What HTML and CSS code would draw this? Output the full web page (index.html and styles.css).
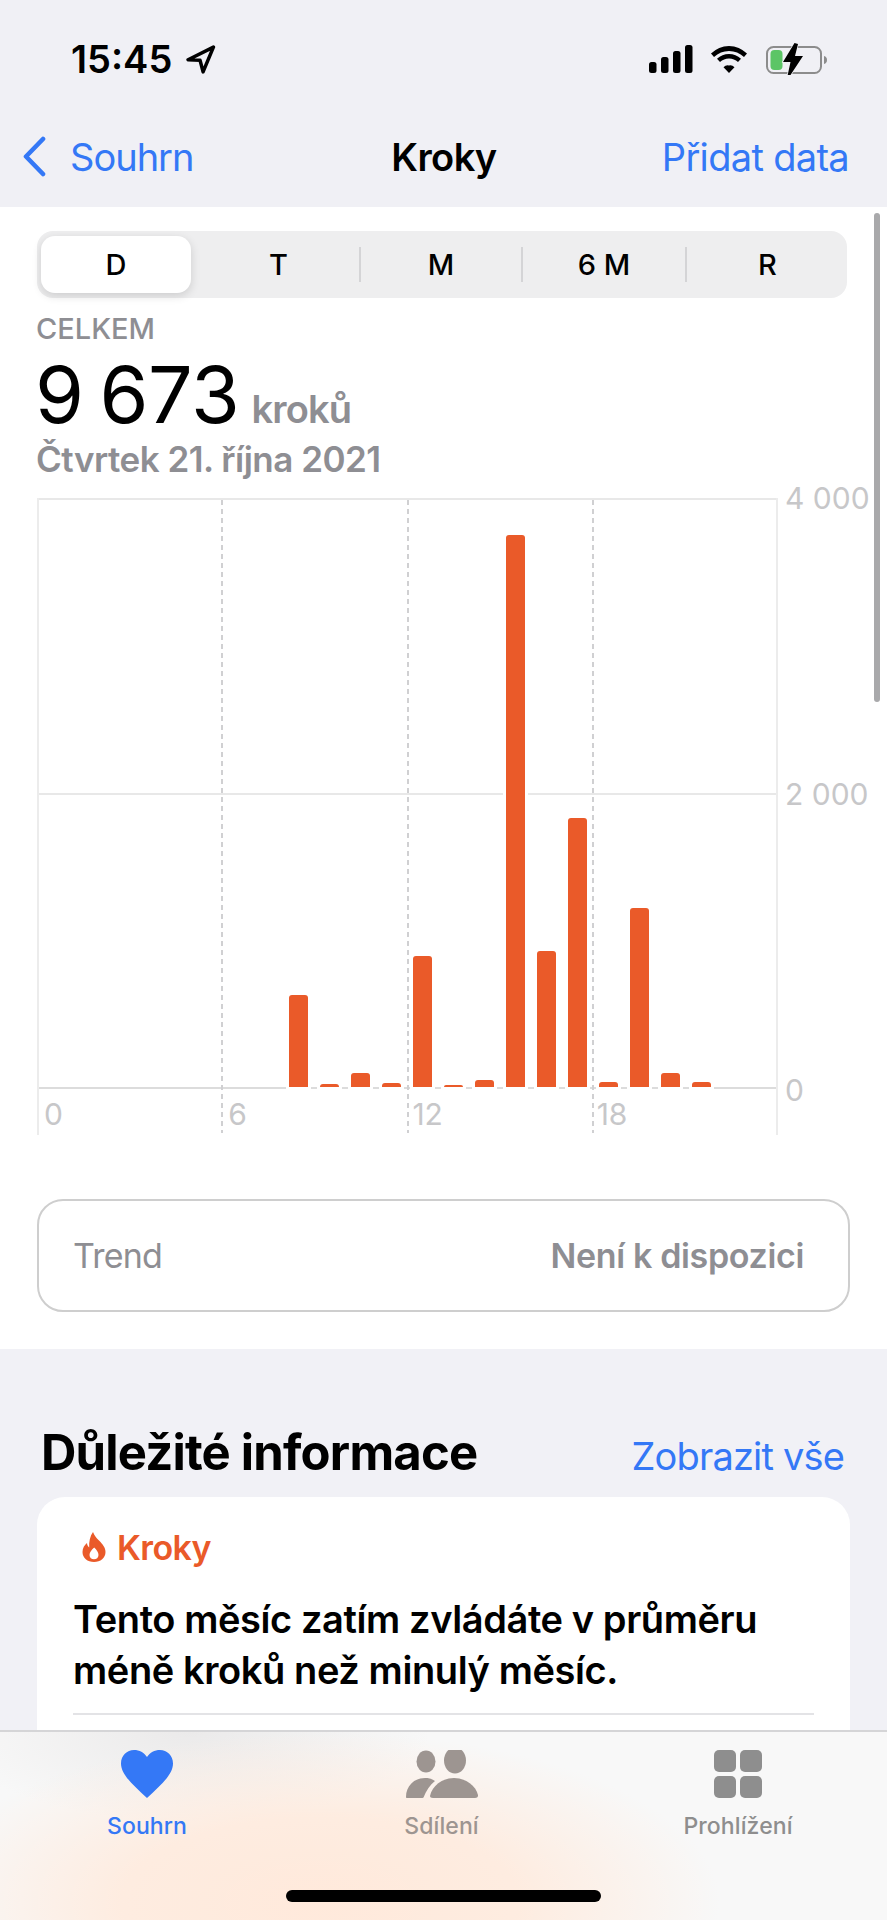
FILE: index.html
```html
<!DOCTYPE html>
<html lang="cs">
<head>
<meta charset="utf-8">
<title>Kroky</title>
<link rel="stylesheet" href="styles.css">
</head>
<body>
<div class="phone">
  <header class="top">
    <div class="status">
      <div class="status-left">
        <span class="clock">15:45</span>
        <svg class="loc" viewBox="0 0 30 28"><path d="M27.500 2 3 14.200l11.600.6L17.500 26z" fill="none" stroke="#000" stroke-width="3.400" stroke-linejoin="round"/></svg>
      </div>
      <div class="status-right">
        <svg class="signal" viewBox="0 0 44 28"><rect x="0" y="17" width="7.500" height="11" rx="2.500"/><rect x="12" y="12" width="7.500" height="16" rx="2.500"/><rect x="24" y="6" width="7.500" height="22" rx="2.500"/><rect x="36" y="0" width="7.500" height="28" rx="2.500"/></svg>
        <svg class="wifi" viewBox="0 0 38 27"><path d="M19 5a22 22 0 0 1 15 6l3-3.400A27 27 0 0 0 19 0 27 27 0 0 0 1 7.600L4 11a22 22 0 0 1 15-6z"/><path d="M19 12.500a13 13 0 0 1 9 3.600l3-3.400A18 18 0 0 0 19 8a18 18 0 0 0-12 4.700l3 3.400a13 13 0 0 1 9-3.600z"/><path d="M19 19.500a6 6 0 0 0-5.500 1.700l5.500 5.800 5.500-5.800a6 6 0 0 0-5.500-1.700z"/></svg>
        <svg class="battery" viewBox="0 0 62 32"><rect x="1" y="4" width="54" height="26" rx="6.500" fill="none" stroke="#8c8c8c" stroke-width="2"/><path d="M58 13v8c2-.5 3-2 3-4s-1-3.500-3-4z" fill="#8c8c8c"/><rect x="4.500" y="7" width="12" height="20" rx="4" fill="#5cc566"/><path d="M28.500 0 17 19h7.500l-3 14 2 .500L37 13h-8l3-12z" fill="#000" stroke="#f0f0f5" stroke-width="1.500" paint-order="stroke"/></svg>
      </div>
    </div>
    <nav class="nav">
      <div class="back">
        <svg class="chev" viewBox="0 0 24 41"><path d="M21 3 4 20.500 21 38" fill="none" stroke="#3478f6" stroke-width="4.600" stroke-linecap="round" stroke-linejoin="round"/></svg>
        <span>Souhrn</span>
      </div>
      <div class="nav-title">Kroky</div>
      <div class="nav-action">Přidat data</div>
    </nav>
  </header>

  <main class="scroll">
    <div class="indicator"></div>
    <section class="sheet">
      <div class="segments">
        <div class="seg active">D</div>
        <div class="seg">T</div>
        <div class="seg rule">M</div>
        <div class="seg rule">6 M</div>
        <div class="seg rule seg-last">R</div>
      </div>
      <div class="overline">CELKEM</div>
      <div class="total"><span class="total-num">9 673</span><span class="total-unit">kroků</span></div>
      <div class="date">Čtvrtek 21. října 2021</div>

      <div class="chart">
        <div class="plot">
          <div class="area">
            <i class="hline"></i>
            <i class="vline v1"></i><i class="vline v2"></i><i class="vline v3"></i>
            <div class="bars">
              <b></b><b></b><b></b><b></b><b></b><b></b><b></b><b></b>
              <b class="bar" style="height:92px"></b>
              <b class="bar" style="height:3px"></b>
              <b class="bar" style="height:14px"></b>
              <b class="bar" style="height:4px"></b>
              <b class="bar" style="height:131px"></b>
              <b class="bar" style="height:2px"></b>
              <b class="bar" style="height:7px"></b>
              <b class="bar" style="height:552px"></b>
              <b class="bar" style="height:136px"></b>
              <b class="bar" style="height:269px"></b>
              <b class="bar" style="height:5px"></b>
              <b class="bar" style="height:179px"></b>
              <b class="bar" style="height:14px"></b>
              <b class="bar" style="height:5px"></b>
              <b></b><b></b>
            </div>
          </div>
          <div class="xaxis"><span>0</span><span>6</span><span>12</span><span>18</span></div>
        </div>
        <div class="yaxis"><span>4 000</span><span>2 000</span><span>0</span></div>
      </div>

      <div class="trend">
        <span class="trend-l">Trend</span>
        <span class="trend-r">Není k dispozici</span>
      </div>
    </section>

    <section class="info">
      <div class="info-head">
        <h2>Důležité informace</h2>
        <span class="see-all">Zobrazit vše</span>
      </div>
      <div class="card">
        <div class="card-tag">
          <svg class="flame" viewBox="0 0 24 30"><path fill-rule="evenodd" fill="#ea5a29" d="M11 0c1.500 3.500 3 5.500 6 8.500 3.500 3.500 6.500 7 6.500 11.500 0 6-5 10-11.500 10S.500 26 .500 20c0-4 2-7 4.500-9 .2 2 .8 3.400 2.200 4.400C6.800 10 8 4 11 0zm1.200 15.500c-2.700 2.500-4.700 4.800-4.700 7.500 0 2.800 2 4.300 4.500 4.300s4.500-1.500 4.500-4.300c0-2.700-1.800-5-4.300-7.500z"/></svg>
          <span>Kroky</span>
        </div>
        <p class="card-text">Tento měsíc zatím zvládáte v průměru méně kroků než minulý měsíc.</p>
        <div class="card-rule"></div>
      </div>
    </section>
  </main>

  <footer class="tabbar">
    <div class="tabs">
      <div class="tab tab-on">
        <svg class="tab-ico" viewBox="0 0 52 48"><path fill="#3478f6" d="M26 48C12 35 0 24.500 0 13.500 0 5.500 6 0 13 0c5.500 0 10 2.500 13 7 3-4.500 7.500-7 13-7 7 0 13 5.500 13 13.500C52 24.500 40 35 26 48z"/></svg>
        <span>Souhrn</span>
      </div>
      <div class="tab tab-share">
        <svg class="tab-ico share" viewBox="0 0 72 48"><g fill="#9d9591"><ellipse cx="20" cy="11.500" rx="9.500" ry="11"/><ellipse cx="49" cy="10.500" rx="11" ry="13"/><path d="M0 47c0-11 8-19 19-19 4 0 7.500 1 10 3-5 4-9 10-11.500 16.500-.2.300-.5.500-1 .500H1c-.6 0-1-.4-1-1z"/><path d="M27 48c-2 0-3-1-3-2 2-10 12-18 24-18s22 8 24 17c.2 2-1 3-3 3z"/></g></svg>
        <span>Sdílení</span>
      </div>
      <div class="tab tab-browse">
        <svg class="tab-ico" viewBox="0 0 48 48"><g fill="#8e8e8e"><rect width="22" height="22" rx="5"/><rect x="26" width="22" height="22" rx="5"/><rect y="26" width="22" height="22" rx="5"/><rect x="26" y="26" width="22" height="22" rx="5"/></g></svg>
        <span>Prohlížení</span>
      </div>
    </div>
    <div class="home"></div>
  </footer>
</div>
</body>
</html>
```

FILE: styles.css
```css
* { box-sizing: border-box; }
html, body { margin: 0; padding: 0; }
body { font-family: Inter, "Liberation Sans", sans-serif; background: #fff; color: #000; }

.phone { width: 887px; height: 1920px; display: flex; flex-direction: column; overflow: hidden; background: #f1f1f6; }

.top { height: 207px; flex: none; background: #f0f0f5; display: flex; flex-direction: column; }
.status { height: 118px; padding: 45px 59px 0 71px; display: flex; justify-content: space-between; align-items: flex-start; }
.status-left { display: flex; align-items: center; gap: 13px; height: 28px; }
.clock { font-size: 38px; font-weight: 600; line-height: 28px; }
.loc { width: 31px; height: 29px; }
.status-right { display: flex; align-items: center; height: 28px; }
.signal { width: 44px; height: 28px; }
.wifi { width: 38px; height: 27px; margin-left: 17px; }
.battery { width: 62px; height: 32px; margin-left: 18px; }

.nav { flex: 1; display: grid; grid-template-columns: 1fr auto 1fr; align-items: center; padding: 0 38px 12px 39px; }
.back { display: flex; align-items: center; gap: 24px; margin-left: -17px; color: #3478f6; font-size: 38px; letter-spacing: -1px; }
.chev { width: 24px; height: 41px; }
.nav-title { font-size: 38px; font-weight: 600; letter-spacing: -.6px; }
.nav-action { justify-self: end; color: #3478f6; font-size: 38px; letter-spacing: -.68px; }

.scroll { flex: 1; min-height: 0; position: relative; overflow: hidden; }
.indicator { position: absolute; z-index: 2; left: 874px; top: 6px; width: 6px; height: 489px; border-radius: 3px; background: #a9a9ab; }

.sheet { height: 1142px; background: #fff; padding: 24px 37px 0; }

.segments { height: 67px; width: 810px; border-radius: 16px; background: #eeeeef; display: grid; grid-template-columns: 160px 163px 162px 164px 161px; }
.seg { display: flex; align-items: center; justify-content: center; font-size: 29px; font-weight: 500; }
.seg.rule { position: relative; }
.seg.rule::before { content: ""; position: absolute; left: -1px; top: 16px; bottom: 16px; width: 2px; background: #d4d4d6; }
.seg-last { padding-left: 2px; }
.seg.active { margin: 5px 6px 5px 4px; background: #fff; border-radius: 14px; box-shadow: 0 3px 10px rgba(0,0,0,.14); }

.overline { margin-top: 17px; height: 28px; line-height: 28px; font-size: 29px; font-weight: 500; color: #8e8e93; margin-left: -1px; }
.total { margin-top: 16px; height: 70px; display: flex; align-items: baseline; gap: 12px; line-height: 70px; margin-left: -2px; }
.total-num { font-size: 79px; font-weight: 400; letter-spacing: -.4px; word-spacing: -6px; }
.total-unit { font-size: 38px; font-weight: 600; color: #8e8e93; letter-spacing: -.8px; }
.date { margin-top: 8px; height: 44px; line-height: 44px; font-size: 35px; font-weight: 600; color: #8e8e93; letter-spacing: -.5px; margin-left: -1px; }

.chart { margin-top: 17px; display: flex; }
.plot { width: 741px; flex: none; border-left: 2px solid #ececec; border-right: 2px solid #ececec; }
.area { height: 591px; position: relative; border-top: 2px solid #e8e8e8; border-bottom: 2px solid #dcdcdc; }
.hline { position: absolute; left: 0; right: 0; top: 293px; height: 2px; background: #e8e8e8; }
.vline { position: absolute; top: 0; bottom: -46px; width: 1.500px; background: repeating-linear-gradient(to bottom, #d0d0d2 0 5px, transparent 5px 9px); }
.v1 { left: 182px; }
.v2 { left: 368px; }
.v3 { left: 553px; }
.bars { position: absolute; inset: 0 -3px 0 -4px; display: grid; grid-template-columns: repeat(24, 1fr); align-items: end; }
.bar { justify-self: center; width: 19px; background: #ea5a29; border-radius: 3px 3px 0 0; box-shadow: 0 0 0 3px #fff; }
.xaxis { height: 46px; display: grid; grid-template-columns: repeat(4, 1fr); }
.xaxis span { padding: 8px 0 0 5px; font-size: 30px; line-height: 34px; color: #c7c7c9; letter-spacing: -.2px; }
.yaxis { flex: none; width: 92px; height: 618px; padding-left: 7px; margin-top: -13px; display: flex; flex-direction: column; justify-content: space-between; font-size: 30px; line-height: 26px; color: #c7c7c9; white-space: nowrap; }

.trend { margin-top: 64px; width: 813px; height: 113px; border: 2px solid #cecece; border-radius: 26px; display: flex; justify-content: space-between; align-items: center; padding: 0 44px 0 34px; font-size: 34px; color: #8e8e93; }
.trend-l { letter-spacing: -.8px; }
.trend-r { font-weight: 600; letter-spacing: -.35px; }

.info { padding: 0 37px; }
.info-head { height: 148px; padding: 74px 6px 0 4px; display: flex; justify-content: space-between; align-items: baseline; }
.info-head h2 { margin: 0; font-size: 49px; line-height: 60px; font-weight: 700; letter-spacing: -.8px; }
.see-all { color: #3478f6; font-size: 38px; letter-spacing: -.83px; }
.card { width: 813px; height: 300px; background: #fff; border-radius: 28px; padding: 35px 36px 0 36px; }
.card-tag { display: flex; align-items: center; gap: 11px; color: #ea5a29; font-size: 34px; font-weight: 600; letter-spacing: -.6px; height: 30px; padding-left: 9px; }
.flame { width: 24px; height: 30px; }
.card-text { margin: 32px 0 0; font-size: 38px; line-height: 51px; font-weight: 600; letter-spacing: -.4px; width: 730px; }
.card-rule { margin-top: 17px; height: 2px; background: #e3e3e6; }

.tabbar { flex: none; height: 190px; position: relative; border-top: 2px solid #d5d5d7;
  background:
    radial-gradient(ellipse 400px 170px at 320px 170px, #ffe9db 0%, rgba(255,234,220,.85) 50%, rgba(255,240,230,0) 100%),
    radial-gradient(ellipse 240px 90px at 190px 0, #ebeaea 0%, rgba(235,234,234,0) 100%),
    #f8f8f8; }
.tabs { height: 150px; display: grid; grid-template-columns: 294px 295px 298px; }
.tab { display: flex; flex-direction: column; align-items: center; padding-top: 18px; font-size: 23px; line-height: 30px; font-weight: 500; letter-spacing: .1px; color: #8e8e8e; }
.tab-ico { height: 48px; width: 48px; margin-bottom: 13px; }
.tab-on { color: #3478f6; }
.tab-on .tab-ico { width: 52px; }
.tab-share { color: #9d9591; }
.tab-share .tab-ico { width: 72px; }
.home { width: 315px; height: 12px; margin: 8px auto 0; border-radius: 6px; background: #000; }
```
